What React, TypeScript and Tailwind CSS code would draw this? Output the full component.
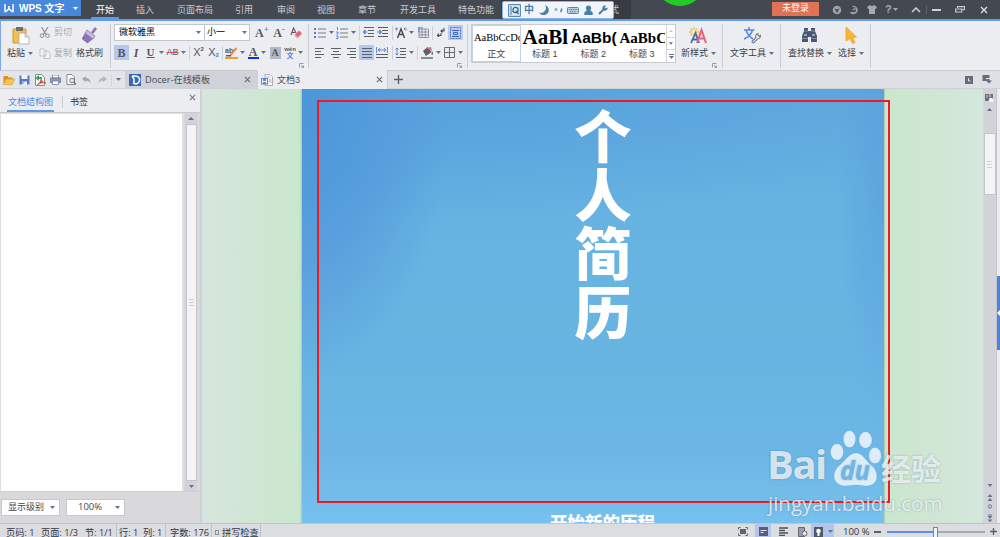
import React from 'react';

type Kids = { children?: React.ReactNode; className?: string };

const Caret = ({ className = 'w-[7px]', color = '#66718f' }: { className?: string; color?: string }) => (
  <span className={`flex shrink-0 items-center justify-center ${className}`}>
    <svg width="5" height="3" viewBox="0 0 5 3"><path d="M0 0h5L2.5 3z" fill={color} /></svg>
  </span>
);

const Slot = ({ children, className = '' }: Kids) => (
  <span className={`flex h-[15px] shrink-0 items-center justify-center ${className}`}>{children}</span>
);

const Rule = ({ className = 'w-1' }: Kids) => (
  <span className={`flex shrink-0 justify-center ${className}`}><span className="h-[14px] w-px bg-[#cfd1d8]" /></span>
);

const Divider = ({ className = '' }: Kids) => <span className={`h-[44px] w-px shrink-0 bg-[#cbcdd4] ${className}`} />;

const Launcher = ({ className = '' }: Kids) => (
  <svg width="5" height="5" viewBox="0 0 5 5" className={`shrink-0 ${className}`}>
    <path d="M.5 4.5v-4h4M2 2l2.5 2.5M4.500 2.500v2h-2" fill="none" stroke="#8088a0" strokeWidth=".8" />
  </svg>
);

const Lines = ({ rows }: { rows: [number, number][] }) => (
  <svg width="12" height="12" viewBox="0 0 12 12">
    {rows.map(([a, b], i) => <path key={i} d={`M${a} ${1.5 + i * 3}H${b}`} stroke="#5d5f68" strokeWidth="1" />)}
  </svg>
);

const Close = ({ size = 7, color = '#666b78' }: { size?: number; color?: string }) => (
  <svg width={size} height={size} viewBox="0 0 8 8"><path d="M1 1l6 6M7 1L1 7" stroke={color} strokeWidth="1.3" /></svg>
);

const Indent = ({ right = false }: { right?: boolean }) => (
  <svg width="11" height="11" viewBox="0 0 11 11">
    <path d="M1 .5h10M5 3.500h6M5 6.500h6M1 9.500h10" stroke="#5d5f68" strokeWidth="1" />
    <path d={right ? 'M0 5h4M2.300 3l2 2-2 2' : 'M4.500 5h-4M2.500 3l-2 2 2 2'} fill="none" stroke="#4d7bdc" strokeWidth="1.2" />
  </svg>
);

function TitleBar() {
  return (
    <header className="relative flex h-[19px] shrink-0 overflow-hidden bg-[#444851] text-[9px] text-[#c9ccd3]">
      <div className="flex h-[16px] w-[81px] shrink-0 items-center bg-[#4588dc] text-white">
        <svg className="ml-[4px]" width="10" height="9" viewBox="0 0 10 9"><path d="M1 0v7.500h1l3-2.800 3 2.800h1V0M5 5V2" fill="none" stroke="#fff" strokeWidth="1.500" /></svg>
        <span className="ml-[5px] w-[46px] text-[10px] font-bold leading-[15px]">WPS 文字</span>
        <Caret className="ml-[8px] w-[5px]" color="#fff" />
      </div>
      <nav className="flex leading-[20px]">
        <span className="ml-[10px] flex h-[19px] w-[28px] justify-center border-b-2 border-[#5b9af0] text-white">开始</span>
        <span className="ml-[17px] w-[18px]">插入</span>
        <span className="ml-[23px] w-[36px]">页面布局</span>
        <span className="ml-[22px] w-[18px]">引用</span>
        <span className="ml-[24px] w-[18px]">审阅</span>
        <span className="ml-[22px] w-[18px]">视图</span>
        <span className="ml-[23px] w-[18px]">章节</span>
        <span className="ml-[24px] w-[36px]">开发工具</span>
        <span className="ml-[22px] w-[36px]">特色功能</span>
        <span className="ml-[7px] w-[130px] bg-[#383b43] pl-[109px]">式</span>
      </nav>
      <div className="ml-auto flex items-center">
        <span className="mb-[1px] mr-[13px] flex h-[14px] w-[47px] items-center justify-center bg-[#e07256] text-white">未登录</span>
        <svg className="w-[10px]" height="10" viewBox="0 0 10 10"><circle cx="5" cy="5" r="4.300" fill="#9da1aa" /><path d="M2.500 3.500l2.500 1 2.500-1L5 8z" fill="#444851" /></svg>
        <svg className="ml-[8px] w-[9px]" height="10" viewBox="0 0 10 10"><path d="M3 1.200A4 4 0 1 1 1 7.800h4.500a2 2 0 1 0-2-2.500" fill="none" stroke="#9da1aa" strokeWidth="1.300" /></svg>
        <svg className="ml-[8px] w-[10px]" height="9" viewBox="0 0 10 9"><path d="M3 0L0 2l1 2 1-.5V9h6V3.500L9 4l1-2-3-2Q5 2 3 0z" fill="#a6a9b1" /></svg>
        <span className="ml-[8px] w-[6px] text-[11px] font-bold leading-none text-[#a6a9b1]">?</span>
        <Caret className="ml-[2px] w-[5px]" color="#a6a9b1" />
        <svg className="ml-[13px]" width="10" height="6" viewBox="0 0 10 6"><path d="M1 5l4-4 4 4" fill="none" stroke="#d0d3d8" strokeWidth="1.500" /></svg>
        <span className="ml-[5px] h-[9px] w-px bg-[#5d616b]" />
        <span className="ml-[5px] h-[2px] w-[9px] bg-[#d0d3d8]" />
        <svg className="ml-[14px]" width="10" height="7" viewBox="0 0 10 7"><path d="M2.500 2V.7h7v3H7.500M.7 3h6v3h-6z" fill="none" stroke="#c6c9cf" strokeWidth="1.200" /></svg>
        <span className="ml-[15px] mr-[12px] flex"><Close size={8} color="#e0e2e6" /></span>
      </div>
      <span className="absolute -top-[44px] left-[655px] h-[50px] w-[50px] rounded-full bg-[#25cb25]" />
    </header>
  );
}

function ImeBar() {
  return (
    <div className="absolute left-[502px] top-[1px] flex h-[18px] w-[112px] items-center rounded-[2px] border border-[#8eb4ec] bg-[#f1f5fa] text-[#4b7ea9]">
      <svg className="ml-[5px]" width="13" height="13" viewBox="0 0 13 13"><path d="M.6.6h11.800v11.800H.6z" fill="#dbe8f3" stroke="#4b7ea9" /><path d="M3 2v9" stroke="#4b7ea9" /><circle cx="7.500" cy="6" r="2.600" fill="none" stroke="#33658f" strokeWidth="1.200" /><path d="M8 7l2.500 3" stroke="#33658f" strokeWidth="1.200" /></svg>
      <span className="ml-[3px] w-[10px] text-[10px] font-bold leading-[12px]">中</span>
      <svg className="ml-[5px]" width="10" height="10" viewBox="0 0 10 10"><path d="M6 0A5 5 0 0 1 0 7.500 5.200 5.200 0 1 0 6 0z" fill="#4b7ea9" /></svg>
      <svg className="ml-[5px]" width="10" height="6" viewBox="0 0 10 6"><circle cx="2" cy="2.500" r="1" fill="none" stroke="#4b7ea9" strokeWidth=".8" /><path d="M7.500 1.500v2L6.500 5" fill="none" stroke="#4b7ea9" strokeWidth="1.500" /></svg>
      <svg className="ml-[3px]" width="12" height="7" viewBox="0 0 12 7"><rect x=".5" y=".5" width="11" height="6" rx="1" fill="#b9d2e6" stroke="#5384ad" /><path d="M2 2.500h8M3 4.700h6" stroke="#4b7ea9" strokeDasharray="1.200 .6" /></svg>
      <svg className="ml-[5px]" width="9" height="10" viewBox="0 0 9 10"><circle cx="4.500" cy="3" r="2.600" fill="#4b7ea9" /><path d="M.3 10V7.500L3 5h3l2.700 2.500V10z" fill="#4b7ea9" /></svg>
      <svg className="ml-[5px]" width="10" height="10" viewBox="0 0 10 10"><path d="M1 9l5-5" stroke="#4b7ea9" strokeWidth="2" /><path d="M7.500.8A2.300 2.300 0 1 0 9.300 3L7.500 3.500 6.300 2.500z" fill="#4b7ea9" stroke="#4b7ea9" strokeWidth=".8" /></svg>
    </div>
  );
}

function Clipboard() {
  return (
    <div className="flex w-[109px] shrink-0">
      <div className="ml-[6px] w-[28px] pt-[5px]">
        <svg className="ml-[5px]" width="18" height="19" viewBox="0 0 18 19"><path d="M1 3h13v14H1z" fill="#efc052" stroke="#cf9a32" /><path d="M4 1h7v4H4z" fill="#777063" /><path d="M7 7h6l4 4v7H7z" fill="#fff" stroke="#a6a8ac" strokeWidth=".8" /><path d="M13 7v4h4" fill="#dddfe3" stroke="#a6a8ac" strokeWidth=".8" /></svg>
        <div className="mt-[2px] flex leading-[12px]"><span className="w-[19px]">粘贴</span><Caret className="ml-[2px] w-[5px]" /></div>
      </div>
      <div className="ml-[4px] w-[34px] text-[#a9abb1]">
        <div className="mt-[4px] flex h-[15px] items-center">
          <svg width="12" height="11" viewBox="0 0 12 11"><path d="M2.500 0l5 8M9 0L4 8" stroke="#8d8f94" strokeWidth="1.200" /><circle cx="3" cy="8.700" r="1.800" fill="none" stroke="#8d8f94" /><circle cx="8.500" cy="8.700" r="1.800" fill="none" stroke="#8d8f94" /></svg>
          <span className="ml-[3px]">剪切</span>
        </div>
        <div className="mt-[6px] flex h-[15px] items-center">
          <svg width="12" height="11" viewBox="0 0 12 11"><path d="M1 1h4l2 2v5H1zM5 3h4l2 2v5.500H5z" fill="#f4f5f6" stroke="#b9bcc2" strokeWidth=".9" /></svg>
          <span className="ml-[3px]">复制</span>
        </div>
      </div>
      <div className="ml-[3px] w-[28px] pt-[5px]">
        <svg className="ml-[5px]" width="17" height="19" viewBox="0 0 17 19"><path d="M14 1l2 2-4 5-2-2z" fill="#8e78ae" /><path d="M6 4l8 6-2 3-8-6z" fill="#c9bedb" stroke="#8b76ad" strokeWidth=".8" /><path d="M4 7l8 6-5 4-6-5z" fill="#8f75b7" /><path d="M3 11l-1.500 2L7 17" stroke="#735799" fill="none" /></svg>
        <div className="mt-[2px] leading-[12px]">格式刷</div>
      </div>
    </div>
  );
}

function FontGroup() {
  return (
    <div className="ml-[4px] w-[194px] shrink-0 text-[#555861]">
      <div className="mt-[3px] flex h-[17px] items-center">
        <span className="flex h-[17px] w-[91px] items-center border border-[#c4c6cd] bg-white text-[9px] text-black"><span className="ml-[4px] w-[77px]">微软雅黑</span><Caret className="w-[5px]" /></span>
        <span className="-ml-px flex h-[17px] w-[46px] items-center border border-[#c4c6cd] bg-white text-[9px] text-black"><span className="ml-[2px] w-[35px]">小一</span><Caret className="w-[5px]" /></span>
        <Slot className="ml-[5px] w-[14px] font-['Liberation_Serif'] text-[12px] font-bold">A<sup className="-top-[4px] text-[9px] text-[#4d7bdc]">+</sup></Slot>
        <Slot className="ml-[3px] w-[14px] font-['Liberation_Serif'] text-[12px] font-bold">A<sup className="-top-[4px] text-[9px] text-[#4d7bdc]">-</sup></Slot>
        <Slot className="ml-[2px] w-[15px]">
          <svg width="12" height="12" viewBox="0 0 12 12"><path d="M1 8l2.500-7L6 6M2 5.500h3" fill="none" stroke="#555861" strokeWidth="1.100" /><path d="M4.500 8L9 3.500 12 6.500 7.500 11z" fill="#e4666c" /><path d="M4.500 8l3 3" stroke="#f4b3b3" strokeWidth="1.500" /></svg>
        </Slot>
      </div>
      <div className="mt-[4px] flex h-[15px] items-center font-['Liberation_Serif'] text-[12px]">
        <Slot className="w-[15px] bg-[#b7c7ec] font-bold">B</Slot>
        <Slot className="w-[14px] font-bold italic">I</Slot>
        <Slot className="w-[15px] text-[11px] font-bold underline">U</Slot>
        <Caret />
        <Slot className="w-[15px] font-['Liberation_Sans'] text-[9px] line-through decoration-[#d3505a]">AB</Slot>
        <Caret />
        <Rule />
        <Slot className="w-[15px] font-['Liberation_Sans'] text-[11px]">X<span className="mb-[6px] text-[6px] font-bold">2</span></Slot>
        <Slot className="w-[15px] font-['Liberation_Sans'] text-[11px]">X<span className="mt-[6px] text-[6px] font-bold text-[#4d7bdc]">2</span></Slot>
        <Rule className="w-[2px]" />
        <Slot className="w-[16px]">
          <svg width="13" height="13" viewBox="0 0 13 13"><text x="0" y="7" fontSize="7" fontWeight="700" fill="#555861" fontFamily="Liberation Sans">ab</text><path d="M5.500 9l6-7" stroke="#ef8a33" strokeWidth="2.200" /><path d="M1 9h5v1.500H1z" fill="#555861" /><path d="M0 11h13v2H0z" fill="#ef9b3c" /></svg>
        </Slot>
        <Caret />
        <Slot className="w-[14px]"><span className="flex h-[13px] w-[11px] items-center justify-center border-b-2 border-[#0b2ef0] text-[12px] font-bold">A</span></Slot>
        <Caret />
        <Slot className="w-[16px]"><span className="flex h-[12px] w-[11px] items-center justify-center bg-[#b2b9c6] text-[10px] font-bold">A</span></Slot>
        <Slot className="w-[14px] flex-col"><span className="font-['Liberation_Sans'] text-[6px] font-bold leading-[6px]">wén</span><span className="font-['Noto_Sans_CJK_SC'] text-[7px] font-bold leading-[7px] text-[#4d7bdc]">文</span></Slot>
        <Caret />
      </div>
      <Launcher className="ml-[185px] mt-[3px]" />
    </div>
  );
}

function ParagraphGroup() {
  return (
    <div className="ml-[4px] w-[155px] shrink-0">
      <div className="mt-[4px] flex h-[15px] items-center">
        <Slot className="w-[16px]"><svg width="12" height="12" viewBox="0 0 12 12"><path d="M4 2h8M4 6h8M4 10h8" stroke="#777a82" strokeWidth="1" /><path d="M0 1h2v2H0zM0 5h2v2H0zM0 9h2v2H0z" fill="#4d7bdc" /></svg></Slot>
        <Caret className="w-[6px]" />
        <Slot className="w-[16px]"><svg width="12" height="12" viewBox="0 0 12 12"><path d="M4 2h8M4 6h8M4 10h8" stroke="#777a82" strokeWidth="1" /><path d="M1.500 0v3M0 5h2v2H.5M0 9h2v2.500H0" fill="none" stroke="#4d7bdc" strokeWidth=".9" /></svg></Slot>
        <Caret />
        <Rule />
        <Slot className="w-[14px]"><Indent /></Slot>
        <Slot className="w-[15px]"><Indent right /></Slot>
        <Rule />
        <Slot className="w-[14px]"><svg width="12" height="12" viewBox="0 0 12 12"><path d="M2.500 11L6 2l3.500 9M4 7.500h4" fill="none" stroke="#474a53" strokeWidth="1.400" /><path d="M0 2h3M9 2h3M1.500 .5v3M10.500 .5L9 2l1.500 1.500" stroke="#5b81c4" fill="none" strokeWidth=".9" /></svg></Slot>
        <Caret />
        <Slot className="w-[16px]"><svg width="11" height="11" viewBox="0 0 11 11"><path d="M1 2h9.500v8.500H1zM1 5h9.500M1 7.800h9.500M4 2v8.500M7.300 2v8.500" fill="none" stroke="#777f92" strokeWidth=".8" /><path d="M0 .8h5M.8 0v5" stroke="#4d7bdc" strokeWidth=".9" /></svg></Slot>
        <Rule className="w-[3px]" />
        <Slot className="w-[14px]"><svg width="8" height="9" viewBox="0 0 8 9"><path d="M7 0v3H4M5.500 1.500L4 3l1.500 1.500M4 5v2.500H0M2 5.700L.3 7.500 2 9" fill="none" stroke="#474a53" strokeWidth="1.100" /></svg></Slot>
        <Slot className="w-[15px] bg-[#bccaee]"><svg width="11" height="12" viewBox="0 0 11 12"><path d="M.5.5h10v11H.5z" fill="none" stroke="#4d74c0" strokeDasharray="2 1" /><path d="M2 3.500h7M3.500 5.500h4v2h-4zM2 9.500h7" fill="none" stroke="#4166b0" /></svg></Slot>
      </div>
      <div className="mt-[5px] flex h-[15px] items-center">
        <Slot className="w-[16px]"><Lines rows={[[1, 10], [1, 7], [1, 10], [1, 7]]} /></Slot>
        <Slot className="w-[15px]"><Lines rows={[[1, 11], [3, 9], [1, 11], [3, 9]]} /></Slot>
        <Slot className="w-[16px]"><Lines rows={[[2, 11], [5, 11], [2, 11], [5, 11]]} /></Slot>
        <Slot className="w-[15px] bg-[#b7c7ec]"><Lines rows={[[1, 11], [1, 11], [1, 11], [1, 11]]} /></Slot>
        <Slot className="w-[16px]"><svg width="12" height="11" viewBox="0 0 12 11"><path d="M.6 0v6M11.400 0v6M2.500 3h7M4 1L2.200 3 4 5M8 1l1.800 2L8 5" fill="none" stroke="#4d7bdc" strokeWidth=".9" /><path d="M0 7.500h12M0 10.500h12" stroke="#5d5f68" /></svg></Slot>
        <Rule />
        <Slot className="w-[14px]"><svg width="12" height="12" viewBox="0 0 12 12"><path d="M5 1.500h6M5 4.500h6M5 7.500h6M1 10.500h10" stroke="#5d5f68" strokeWidth="1.200" /><path d="M2 1v7M.5 2.500L2 1l1.500 1.500M.5 6.500L2 8l1.500-1.500" fill="none" stroke="#4d7bdc" strokeWidth=".9" /></svg></Slot>
        <Caret />
        <Rule />
        <Slot className="w-[16px]"><svg width="13" height="13" viewBox="0 0 13 13"><path d="M2 5l4.500-4 4 5L5 10z" fill="#5e606a" /><path d="M5 2l5-1 1 4z" fill="#d67078" /><path d="M11 5q2 3 0 4-1-1 0-4z" fill="#5e606a" /><path d="M0 11h12v2H0z" fill="#8b8d92" /></svg></Slot>
        <Caret className="w-[6px]" />
        <Slot className="w-[16px]"><svg width="11" height="11" viewBox="0 0 11 11"><path d="M.5.5h10v10H.5zM5.500.5v10M.5 5.500h10" fill="none" stroke="#696c75" /></svg></Slot>
        <Caret className="w-[6px]" />
      </div>
      <Launcher className="ml-[145px] mt-[3px]" />
    </div>
  );
}

const STYLES = [
  { sample: 'AaBbCcDc', name: '正文', cls: "font-['Liberation_Serif'] text-[10.5px]" },
  { sample: 'AaBl', name: '标题 1', cls: "font-['Liberation_Serif'] text-[21px] font-bold" },
  { sample: 'AaBb(', name: '标题 2', cls: "font-['Liberation_Sans'] text-[15.5px] font-bold" },
  { sample: 'AaBbC', name: '标题 3', cls: "font-['Liberation_Serif'] text-[15px] font-bold" },
];

function StyleGallery() {
  return (
    <div className="ml-[4px] mt-[3px] flex h-[39px] w-[205px] shrink-0 border border-[#c9cbd2] bg-white">
      {STYLES.map((s, i) => (
        <div key={s.name} className={`w-[48.5px] shrink-0 border ${i === 0 ? 'border-[#c3cfec]' : 'border-transparent'}`}>
          <div className={`flex h-[24px] items-center overflow-hidden whitespace-nowrap pl-[1px] text-black ${s.cls}`}>{s.sample}</div>
          <div className="text-center text-[9px] leading-[9px] text-[#44474f]">{s.name}</div>
        </div>
      ))}
      <div className="flex flex-1 flex-col border-l border-[#d2d4da]">
        <span className="flex flex-1 items-center justify-center border-b border-[#d2d4da]"><svg width="4" height="2" viewBox="0 0 4 2"><path d="M0 2l2-2 2 2z" fill="#c0c2ca" /></svg></span>
        <span className="flex flex-1 items-center justify-center border-b border-[#d2d4da]"><Caret className="w-[4px]" /></span>
        <span className="flex flex-1 flex-col items-center justify-center gap-px"><i className="h-px w-[5px] bg-[#66718f]" /><Caret className="w-[5px]" /></span>
      </div>
    </div>
  );
}

function BigTool({ label, className, iconClass, children, caretClass = 'ml-[3px] w-[5px]' }: { label: string; className: string; iconClass: string; children: React.ReactNode; caretClass?: string }) {
  return (
    <div className={`shrink-0 pt-[6px] ${className}`}>
      <div className={`h-[18px] ${iconClass}`}>{children}</div>
      <div className="mt-[2px] flex leading-[12px]"><span>{label}</span><Caret className={caretClass} /></div>
    </div>
  );
}

function Ribbon() {
  return (
    <section className="flex h-[52px] shrink-0 overflow-hidden whitespace-nowrap border-b border-l border-t-2 border-b-[#c9cbd2] border-l-[#7fa7e4] border-t-[#609bea] bg-[#ecedf0] text-[9px] text-[#3b3e46]">
      <Clipboard />
      <Divider className="mt-[3px]" />
      <div className="-ml-px flex">
        <FontGroup />
        <Divider className="mt-[3px]" />
        <div className="-ml-px flex"><ParagraphGroup /></div>
      </div>
      <Divider className="mt-[3px]" />
      <div className="-ml-px flex"><StyleGallery /></div>
      <BigTool label="新样式" className="ml-[5px] w-[36px]" iconClass="pl-[8px]">
        <svg width="18" height="17" viewBox="0 0 18 17"><path d="M5 0v10M0 5h10M1.500 1.500l7 7M8.500 1.500l-7 7" stroke="#f6bd3a" strokeWidth="1.300" /><circle cx="5" cy="5" r="2" fill="#fff6d0" /><path d="M2 16L6.500 6 10 16M3.500 12.500h5" fill="none" stroke="#4d6da8" strokeWidth="1.800" /><path d="M8 16l4.500-13L17 16M9.500 11.500h6" fill="none" stroke="#e4607d" strokeWidth="2" /></svg>
      </BigTool>
      <div className="w-0"><Launcher className="-ml-[5px] mt-[42px]" /></div>
      <Divider className="ml-[5px] mt-[3px]" />
      <BigTool label="文字工具" className="ml-[7px] w-[50px]" iconClass="pl-[13px]">
        <svg width="18" height="17" viewBox="0 0 18 17"><path d="M6 0v3M1 3h10.500M3 3q2 6 7 9M9.500 3Q8 9 1 12" fill="none" stroke="#5688e2" strokeWidth="1.500" /><path d="M9 14.500l4-4q-1-3 2-4v2l1.500 1 1-1q0 3-3 3.500l-4 4q-1.500 0-1.500-1.500z" fill="#f5f5f7" stroke="#777b88" strokeWidth="1.100" /></svg>
      </BigTool>
      <Divider className="mt-[3px]" />
      <BigTool label="查找替换" className="ml-[7px] w-[50px]" iconClass="pl-[13px]">
        <svg width="17" height="17" viewBox="0 0 17 17"><path d="M3 1h4v3h3V1h4v3l2 5v6h-6v-5H7v5H1V9l2-5z" fill="#4a5874" /><path d="M3 4h4M10 4h4M1 11.500h6M10 11.500h6" stroke="#7d8ba7" /><path d="M3 8h3M11 8h3" stroke="#e4e8f0" /></svg>
      </BigTool>
      <BigTool label="选择" className="w-[32px]" iconClass="pl-[7px]">
        <svg width="12" height="17" viewBox="0 0 12 17"><path d="M1 0l10.500 10-4 .5 2.500 5-2.500 1-2.500-5L1 14z" fill="#f9b536" stroke="#e69b21" strokeWidth=".7" /></svg>
      </BigTool>
      <Divider className="mt-[3px]" />
    </section>
  );
}

function TabStrip() {
  return (
    <div className="flex h-[18px] shrink-0 items-center whitespace-nowrap border-b border-[#cfd1d6] bg-[#dfe0e5] text-[9px] text-[#4b4e57]">
      <div className="flex h-full w-[125px] shrink-0 items-center bg-[#e4e5e9] pl-[3px]">
        <svg width="12" height="10" viewBox="0 0 12 10"><path d="M.5 9V1h4l1 1.500h4V4" fill="#d79321" /><path d="M.5 9.500L3 4h9L9 9.500z" fill="#fbc550" stroke="#da961f" strokeWidth=".6" /></svg>
        <svg className="ml-[4px]" width="11" height="10" viewBox="0 0 11 10"><path d="M.5.5h10v9H.5z" fill="#547acb" /><path d="M2.500 0h6v4h-6zM3 6.500h5V10H3z" fill="#eef2fb" /><path d="M4 7v2" stroke="#547acb" /></svg>
        <svg className="ml-[5px]" width="11" height="12" viewBox="0 0 11 12"><path d="M.5.5h6l3 3v8h-9z" fill="#fff" stroke="#7e9180" /><path d="M0 4l4-3v2h3v2H4v2z" fill="#3ea55e" /><path d="M2 11q4-3 4-6 1 4 5 4-5-1-9 2z" fill="#d4484e" stroke="#d4484e" strokeWidth=".7" /></svg>
        <svg className="ml-[4px]" width="11" height="10" viewBox="0 0 11 10"><path d="M2.500 0h6v3h-6z" fill="#fff" stroke="#747e99" strokeWidth=".8" /><path d="M.5 3h10v4.500H.5z" fill="#929bb4" stroke="#6c7590" strokeWidth=".8" /><path d="M2.500 6h6v3.500h-6z" fill="#fff" stroke="#747e99" strokeWidth=".8" /></svg>
        <svg className="ml-[5px]" width="11" height="11" viewBox="0 0 11 11"><path d="M1 .5h5l2.500 2.500v7.500H1z" fill="#fff" stroke="#7c8089" strokeWidth=".9" /><circle cx="6" cy="6.500" r="2.300" fill="#e6e9ef" stroke="#646973" strokeWidth=".9" /><path d="M7.700 8.200L10 10.500" stroke="#646973" strokeWidth="1.200" /></svg>
        <svg className="ml-[5px]" width="9" height="8" viewBox="0 0 9 8"><path d="M0 3l4-3v2q4 0 4.500 5Q7 4.500 4 4.500V6z" fill="#a0a4ae" /></svg>
        <svg className="ml-[7px]" width="9" height="8" viewBox="0 0 9 8"><path d="M9 3L5 0v2Q1 2 .5 7 2 4.500 5 4.500V6z" fill="#b3b6be" /></svg>
        <span className="ml-[4px] h-[12px] w-px bg-[#d3d4d9]" />
        <Caret className="ml-[4px] w-[5px]" />
      </div>
      <div className="flex h-full w-[133px] shrink-0 items-center bg-[#d0d1d9]">
        <svg className="ml-[4px] mt-[1px]" width="12" height="12" viewBox="0 0 12 12"><path d="M0 0h12v12H0z" fill="#3769b4" /><path d="M3 2h3a4 4 0 1 1-2 7M3 2l2 3v4" fill="none" stroke="#fff" strokeWidth="1.500" /></svg>
        <span className="ml-[4px] mt-[1px] w-[99px] font-['Open_Sans','Noto_Sans_CJK_SC',sans-serif] text-[9.2px]">Docer-在线模板</span>
        <Close size={7} />
      </div>
      <div className="flex h-[19px] w-[130px] shrink-0 items-center border-r border-[#cbcdd3] bg-[#ecedf0]">
        <svg className="ml-[3px]" width="12" height="12" viewBox="0 0 12 12"><path d="M4 .5h5l2.500 2.500v8.500H4z" fill="#f7f7f8" stroke="#9a9da3" strokeWidth=".8" /><path d="M5.500 3h3M8 6h2.500M8 8h2.500" stroke="#a6a9af" /><path d="M0 4h7v6.500H0z" fill="#5d87c9" /><path d="M1.500 5v4.500M5.500 5v4.500M1.500 7.500h4" stroke="#fff" /></svg>
        <span className="ml-[4px] mt-[3px] w-[99px]">文档3</span>
        <Close size={7} />
      </div>
      <svg className="ml-[6px]" width="9" height="9" viewBox="0 0 9 9"><path d="M4.500 0v9M0 4.500h9" stroke="#596070" strokeWidth="1.400" /></svg>
      <svg className="ml-auto" width="8" height="8" viewBox="0 0 8 8"><path d="M0 0h8v8H0z" fill="#676c78" /><path d="M3.500 2v3h2" stroke="#dfe0e5" fill="none" /></svg>
      <svg className="ml-[9px] mr-[8px]" width="10" height="9" viewBox="0 0 10 9"><path d="M.5 0h7v3H4v3H.500zM4.500 4h3v1.500H10L7 8.500 4 5.500z" fill="#676c78" /></svg>
    </div>
  );
}

const Select = ({ label, className, textClass }: { label: string; className: string; textClass: string }) => (
  <span className={`flex h-[17px] items-center border border-[#c7c8ce] bg-white text-[#44474f] ${className}`}>
    <span className={textClass}>{label}</span><Caret className="w-[5px]" />
  </span>
);

function OutlinePane() {
  return (
    <aside className="flex w-[202px] shrink-0 flex-col border-r-2 border-[#d0d1d7] bg-[#d9d9dc] text-[9px]">
      <div className="flex h-[24px] shrink-0 border-b border-[#c9cad0] bg-[#ecedf0] leading-[26px]">
        <span className="ml-[7px] flex w-[47px] justify-center border-b-2 border-[#5b98ea] text-[#4a8ee6]">文档结构图</span>
        <span className="ml-[8px] mt-[7px] h-[12px] w-px bg-[#cbcdd4]" />
        <span className="ml-[7px] w-[119px] text-[#33363d]">书签</span>
        <span className="mt-[5px]"><Close size={7} color="#777c88" /></span>
      </div>
      <div className="flex h-[379px] shrink-0 border-b border-[#cfd0d5]">
        <div className="w-[184px] border-l border-r-2 border-t border-[#dedfe4] bg-white" />
        <div className="ml-[1px] flex w-[12px] flex-col items-center bg-[#d2d3d9]">
          <span className="flex h-[11px] items-center"><svg width="6" height="3" viewBox="0 0 6 3"><path d="M0 3l3-3 3 3z" fill="#5d6c92" /></svg></span>
          <span className="flex w-[11px] flex-1 flex-col items-center justify-center gap-[2px] border border-[#c5c6cd] bg-[#f4f4f5]">
            <i className="h-px w-[5px] bg-[#cfd0d4]" /><i className="h-px w-[5px] bg-[#cfd0d4]" /><i className="h-px w-[5px] bg-[#cfd0d4]" />
          </span>
          <span className="flex h-[10px] items-center"><Caret /></span>
        </div>
      </div>
      <div className="mt-[7px] flex pl-[1px]">
        <Select label="显示级别" className="w-[59px]" textClass="ml-[6px] w-[42px]" />
        <Select label="100%" className="ml-[6px] w-[59px] font-['Open_Sans',sans-serif] text-[9.5px]" textClass="ml-[11px] w-[37px]" />
      </div>
    </aside>
  );
}

function Watermark() {
  return (
    <div className="absolute left-[565px] top-[340px] w-[182px] whitespace-nowrap text-white/75 [text-shadow:0_0_2px_rgba(60,100,130,0.5)]">
      <div className="flex h-[60px]">
        <span className="w-[62px] pt-[15px] font-['Open_Sans'] text-[40px] font-bold leading-[40px] tracking-[-1.5px]">Bai</span>
        <svg width="52" height="58" viewBox="0 0 52 58">
          <g fill="#fff" fillOpacity=".75" stroke="#4f86a5" strokeOpacity=".3" strokeWidth=".6">
            <ellipse cx="8" cy="23" rx="6.500" ry="8.300" /><ellipse cx="20.500" cy="10" rx="6.200" ry="8.600" /><ellipse cx="36.500" cy="11" rx="6.500" ry="8.300" /><ellipse cx="46" cy="26.500" rx="6.200" ry="8" />
            <path d="M27 24c7 0 9 7 15 12 8 6 9 20-4 21-5 0-7-1-11-1s-7 1-11 1C3 56 2 43 11 36c6-5 9-12 16-12z" />
          </g>
          <text x="11" y="51" fontSize="27" fontWeight="700" fontStyle="italic" fontFamily="Open Sans" fill="#70b7e5" textLength="30" lengthAdjust="spacingAndGlyphs">du</text>
        </svg>
        <span className="w-[62px] pt-[20px] font-['Noto_Sans_CJK_SC'] text-[30px] font-bold leading-[36px]">经验</span>
      </div>
      <div className="pl-[1px] pt-[1px] font-['Open_Sans'] text-[20.5px] font-medium leading-[26px]">jingyan.baidu.com</div>
    </div>
  );
}

function DocumentArea() {
  return (
    <main className="relative flex min-w-0 flex-1 overflow-hidden">
      <div className="w-[100px] shrink-0 bg-linear-to-r from-[#d7e6df] via-[#d0e6d4] to-[#cae7cd] shadow-[inset_-2px_0_2px_-1px_#a9c9ad]" />
      <article className="flex w-[582px] shrink-0 flex-col items-center bg-[radial-gradient(ellipse_26%_68%_at_0%_0%,#4b96d9_0%,#549bdccc_55%,transparent_100%),radial-gradient(ellipse_90%_32%_at_20%_0%,#559fdccc,transparent),radial-gradient(ellipse_8%_60%_at_100%_20%,#579fdcaa,transparent),linear-gradient(180deg,#60a9df_0%,#66b2e1_25%,#69b5e2_65%,#6cb7e5_85%,#77c1ee_100%)] text-white">
        <h1 className="mt-[15px] flex w-[60px] shrink-0 flex-col items-center pl-[20px] font-['Noto_Sans_CJK_SC'] text-[57px] font-black leading-[58.7px]">
          <span>个</span><span>人</span><span>简</span><span>历</span>
        </h1>
        <p className="mt-[169px] h-[30px] whitespace-nowrap pl-[19px] font-['Noto_Sans_CJK_SC'] text-[17.5px] font-black leading-[27px]">开始新的历程</p>
      </article>
      <div className="flex-1 bg-linear-to-r from-[#cae7cd] via-[#d0e6d4] to-[#d5e7dd] shadow-[inset_1px_0_1px_#afcfb3]" />
      <div className="flex w-[13px] shrink-0 flex-col items-center bg-[#d2d3d9]">
        <svg className="mt-[5px]" width="9" height="8" viewBox="0 0 9 8"><path d="M0 0h8v7H0z" fill="#68707e" /><path d="M2 1v2.500M5 0v3M4 7l1-3 3 1v3z" stroke="#f6f6f7" fill="#f6f6f7" strokeWidth=".8" /></svg>
        <svg className="mt-[6px]" width="5" height="3" viewBox="0 0 5 3"><path d="M0 3l2.500-3L5 3z" fill="#5d6c92" /></svg>
        <span className="mt-[22px] flex h-[62px] w-[12px] shrink-0 flex-col items-center justify-center gap-[2px] border border-[#c4c5cb] bg-[#f4f4f5]">
          <i className="h-px w-[5px] bg-[#cfd0d4]" /><i className="h-px w-[5px] bg-[#cfd0d4]" /><i className="h-px w-[5px] bg-[#cfd0d4]" />
        </span>
        <svg className="mt-auto" width="6" height="40" viewBox="0 0 6 40"><path d="M.5 1h5L3 4zM.5 14L3 11l2.500 3zM.5 18L3 15l2.500 3zM.5 33h5L3 36zM.5 36.500h5L3 39z" fill="#68748f" /><circle cx="3" cy="23.500" r="1.700" fill="none" stroke="#68748f" /><path d="M1 32h4" stroke="#68748f" /></svg>
      </div>
      <div className="w-[4px] shrink-0 border-l border-[#c5c6cd] bg-[#ececef]">
        <div className="mt-[187px] flex h-[74px] items-center bg-[#4286e2]"><svg width="3" height="6" viewBox="0 0 3 6"><path d="M0 3l3-3v6z" fill="#fff" /></svg></div>
      </div>
      <div className="absolute left-[115px] top-[11px] h-[403px] w-[573px] border-2 border-[#ec1c24]" />
      <Watermark />
    </main>
  );
}

function StatusBar() {
  return (
    <footer className="flex h-[14px] shrink-0 overflow-hidden whitespace-nowrap border-t border-[#c3c4ca] bg-[#dcdde1] font-['Open_Sans','Noto_Sans_CJK_SC',sans-serif] text-[9.200px] leading-[18px] text-[#33363f]">
      <span className="ml-[6px] w-[35px]">页码: 1</span>
      <span className="w-[44px]">页面: 1/3</span>
      <span className="w-[31px]">节: 1/1</span>
      <span className="w-[27px] border-l border-[#c0c1c8] pl-[2px]">行: 1</span>
      <span className="w-[22px]">列: 1</span>
      <span className="w-[46px] border-l border-[#c0c1c8] pl-[4px]">字数: 176</span>
      <span className="flex w-[50px] border-l border-r border-[#c0c1c8]"><i className="ml-[3px] mr-[3px] mt-[6px] h-[5px] w-[4px] border border-[#8d9099]" />拼写检查</span>
      <div className="ml-auto flex">
        <Slot className="w-[19px]"><svg width="10" height="9" viewBox="0 0 10 9"><path d="M2 2h6v5H2z" fill="#60646d" /><path d="M.5 2.500v-2h2M7.500.5h2v2M.5 6.500v2h2M7.500 8.500h2v-2" fill="none" stroke="#60646d" /></svg></Slot>
        <Slot className="ml-[3px] w-[16px] bg-[#b4c5ec]"><svg width="9" height="9" viewBox="0 0 9 9"><path d="M0 0h9v9H0z" fill="#566078" /><path d="M1.500 3.500h6M1.500 5.500h3" stroke="#dce2f0" /></svg></Slot>
        <Slot className="ml-[4px] w-[16px]"><svg width="9" height="9" viewBox="0 0 9 9"><path d="M0 1h9M0 3.500h6M0 6h9M0 8.500h6" stroke="#4d515b" strokeWidth="1.300" /></svg></Slot>
        <Slot className="ml-[4px] w-[16px]"><svg width="10" height="10" viewBox="0 0 10 10"><path d="M.5.5h6v9h-6z" fill="#9a9ea8" stroke="#646873" /><circle cx="6.500" cy="6.500" r="2.500" fill="#e4e5e9" stroke="#646873" /></svg></Slot>
        <Slot className="w-[15px] bg-[#b4c5ec]"><svg width="9" height="10" viewBox="0 0 9 10"><path d="M0 0h9v10H0z" fill="#50586b" /><circle cx="4.500" cy="4" r="2.300" fill="#fff" /><path d="M3.500 6h2v3h-2z" fill="#fff" /></svg></Slot>
        <Slot className="w-[8px] bg-[#b4c5ec]"><Caret className="w-[5px]" /></Slot>
        <span className="ml-[9px] w-[31px] text-[9.500px] leading-[15px]">100 %</span>
        <span className="mt-[7px] h-[2px] w-[7px] bg-[#566078]" />
        <span className="ml-[6px] mt-[7px] h-[2px] w-[46px] bg-[#5a90e8]" />
        <span className="mt-[3px] h-[12px] w-[5px] border border-[#82858f] bg-[#f4f4f5]" />
        <span className="mt-[7px] h-[2px] w-[47px] bg-[#a3a9b5]" />
        <svg className="ml-[5px] mr-[3px] mt-[4px]" width="7" height="7" viewBox="0 0 7 7"><path d="M3.500 0v7M0 3.500h7" stroke="#566078" strokeWidth="1.400" /></svg>
      </div>
    </footer>
  );
}

export default function App() {
  return (
    <div className="relative flex h-[537px] w-[1000px] flex-col overflow-hidden bg-[#ecedf0] font-['Liberation_Sans','Noto_Sans_CJK_SC',sans-serif]">
      <TitleBar />
      <Ribbon />
      <TabStrip />
      <div className="flex h-[434px] shrink-0">
        <OutlinePane />
        <DocumentArea />
      </div>
      <StatusBar />
      <ImeBar />
    </div>
  );
}
